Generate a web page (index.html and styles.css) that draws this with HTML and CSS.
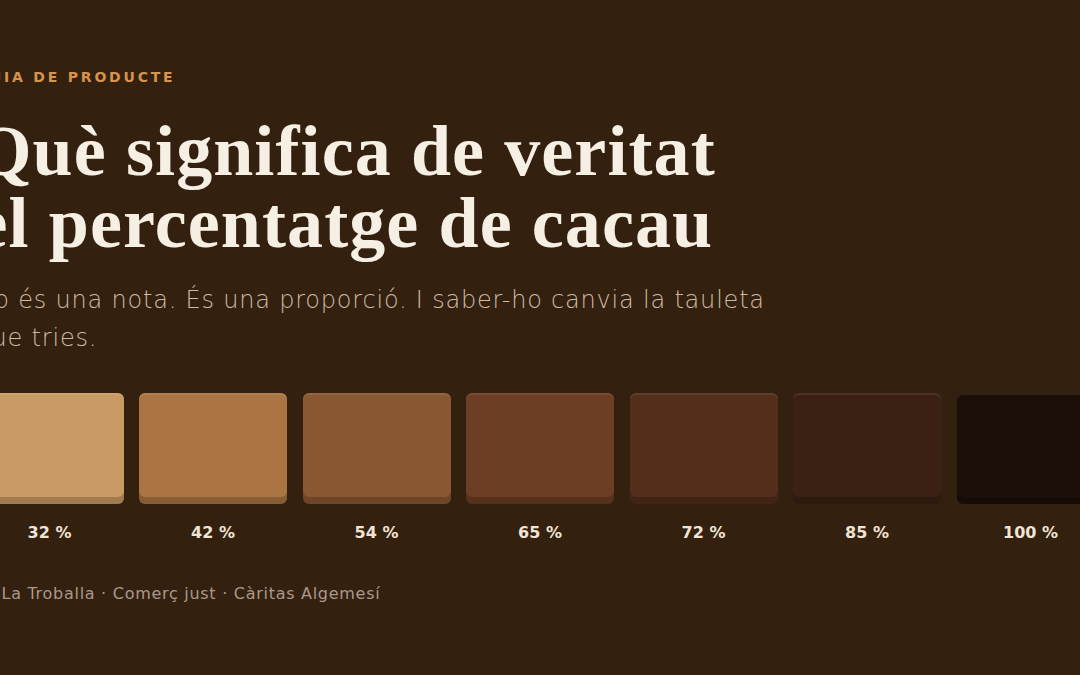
FILE: index.html
```html
<!DOCTYPE html>
<html lang="ca">
<head>
<meta charset="utf-8">
<title>Guia de producte · Percentatge de cacau</title>
<link rel="stylesheet" href="styles.css">
</head>
<body>
<main class="page">
  <p class="eyebrow">Guia de producte</p>
  <h1 class="title">Què significa de veritat<br>el percentatge de cacau</h1>
  <p class="lead">No és una nota. És una proporció. I saber-ho canvia la tauleta que tries.</p>
  <ul class="scale">
    <li class="step"><span class="bar" style="background:#c99a64"></span><span class="pct">32 %</span></li>
    <li class="step"><span class="bar" style="background:#aa7542"></span><span class="pct">42 %</span></li>
    <li class="step"><span class="bar" style="background:#8a5733"></span><span class="pct">54 %</span></li>
    <li class="step"><span class="bar" style="background:#6c3e24"></span><span class="pct">65 %</span></li>
    <li class="step"><span class="bar" style="background:#532e1b"></span><span class="pct">72 %</span></li>
    <li class="step"><span class="bar" style="background:#3b2114"></span><span class="pct">85 %</span></li>
    <li class="step"><span class="bar" style="background:#1c0f08"></span><span class="pct">100 %</span></li>
  </ul>
  <footer class="foot">
    <svg class="bean" viewBox="0 0 18 18" width="18" height="18" aria-hidden="true"><ellipse cx="9" cy="9" rx="5" ry="8" fill="none" stroke="#a8998a" stroke-width="1.5"/><path d="M9 2 C7 7 11 11 9 16" fill="none" stroke="#a8998a" stroke-width="1.2"/></svg>
    <span>La Troballa · Comerç just · Càritas Algemesí</span>
  </footer>
</main>
</body>
</html>
```

FILE: styles.css
```css
html, body {
  margin: 0;
  padding: 0;
  background: #34200f;
  overflow: hidden;
}
body {
  width: 1080px;
  height: 675px;
  font-family: "DejaVu Sans", Inter, sans-serif;
}
.page {
  width: 1129px;
  margin-left: calc(50% - 564.5px);
  padding-top: 69px;
}
.eyebrow {
  margin: 0;
  font-size: 14px;
  line-height: 16px;
  font-weight: 700;
  letter-spacing: 0.2em;
  text-transform: uppercase;
  color: #d6944c;
}
.title {
  margin: 30px 0 0;
  font-family: "Liberation Serif", serif;
  font-weight: 700;
  font-size: 72px;
  line-height: 72px;
  color: #f6efe4;
  letter-spacing: 1.1px;
}
.lead {
  margin: 22px 0 0;
  max-width: 820px;
  font-size: 24px;
  line-height: 38px;
  font-weight: 200;
  letter-spacing: 0.8px;
  color: #cdbca4;
}
.scale {
  list-style: none;
  margin: 36px 0 0;
  padding: 0;
  display: grid;
  grid-template-columns: repeat(7, 1fr);
  column-gap: 15.5px;
}
.step {
  display: flex;
  flex-direction: column;
  align-items: center;
}
.bar {
  display: block;
  width: 100%;
  height: 111px;
  border-radius: 6px;
  box-shadow: inset 0 2px 0 rgba(255, 255, 255, 0.08), inset 0 -7px 0 rgba(0, 0, 0, 0.2);
}
.pct {
  margin-top: 18px;
  font-size: 16px;
  line-height: 22px;
  font-weight: 700;
  color: #f0e4d4;
}
.foot {
  margin-top: 40px;
  display: flex;
  align-items: center;
  gap: 8px;
  font-size: 16px;
  line-height: 20px;
  letter-spacing: 0.72px;
  color: #a8998a;
}
.bean { flex: none; }
```
